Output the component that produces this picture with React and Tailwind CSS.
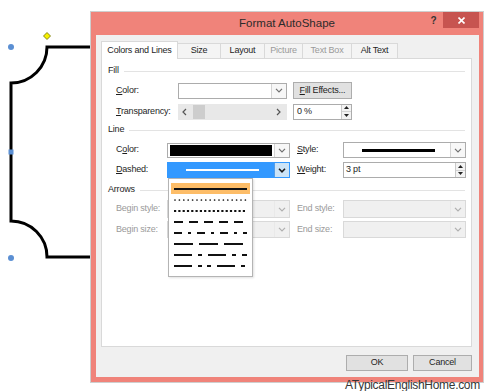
import clsx from 'clsx'

function Chevron({ dark }) {
  return (
    <svg width="8" height="5" viewBox="0 0 8 5">
      <path d="M1 0.8 L4 3.8 L7 0.8" fill="none" stroke={dark ? '#1a1a1a' : '#707070'} strokeWidth={dark ? 1.6 : 1.2} />
    </svg>
  )
}

function Spin() {
  return (
    <div className="w-[10px] flex flex-col border-l border-[#c9c9c9] bg-[#f3f3f3]">
      <div className="flex-1 flex items-center justify-center border-b border-[#d4d4d4]">
        <svg width="5" height="3" viewBox="0 0 5 3"><path d="M0 3 L2.5 0 L5 3Z" fill="#222" /></svg>
      </div>
      <div className="flex-1 flex items-center justify-center">
        <svg width="5" height="3" viewBox="0 0 5 3"><path d="M0 0 L2.5 3 L5 0Z" fill="#222" /></svg>
      </div>
    </div>
  )
}

function Combo({ className, children, disabled, active }) {
  return (
    <div
      className={clsx(
        'flex border',
        disabled && 'border-[#d9d9d9] bg-[#f0f0f0]',
        active && 'border-[#3399ff] bg-[#3399ff]',
        !disabled && !active && 'border-[#acacac] bg-white',
        className
      )}
    >
      <div className="flex-1 flex items-center">{children}</div>
      <div
        className={clsx(
          'w-[15px] flex items-center justify-center border-l',
          disabled && 'border-[#e3e3e3] bg-[#f0f0f0] opacity-50',
          active && 'border-[#569de5] bg-[#cce4f7]',
          !disabled && !active && 'border-[#d4d4d4] bg-[#f7f7f7]'
        )}
      >
        <Chevron dark={active} />
      </div>
    </div>
  )
}

function Header({ label, className }) {
  return (
    <div className={clsx('flex items-center h-[12px] pl-[6px] pr-[6px]', className)}>
      <span>{label}</span>
      <div className="flex-1 h-px bg-[#e3e3e3] ml-[5px]" />
    </div>
  )
}

const dashes = [
  { d: null, w: 2 },
  { d: '0 4.4', w: 1.7, cap: 'round' },
  { d: '2.2 2.1', w: 2.2 },
  { d: '9 6', w: 2.2 },
  { d: '8 6 3 6', w: 2.2 },
  { d: '19 6', w: 2.2 },
  { d: '18 6 4 6', w: 2.2 },
  { d: '18 6 4 5 4 6', w: 2.2 },
]

function DashList() {
  return (
    <div className="absolute left-[66px] top-[119px] w-[85px] h-[99px] border border-[#b4b4b4] bg-white pt-[4px] shadow-[1px_1px_2px_rgba(0,0,0,0.12)]">
      {dashes.map((l, i) => (
        <div key={i} className={clsx('h-[11px] mx-[2px] px-[3px] flex items-center', i === 0 && 'bg-[#fdbd68]')}>
          <svg width="73" height="4" viewBox="0 0 73 4">
            <line x1={l.cap ? 1 : 0} y1="2" x2="73" y2="2" stroke="#111" strokeWidth={l.w} strokeDasharray={l.d || undefined} strokeLinecap={l.cap || 'butt'} />
          </svg>
        </div>
      ))}
    </div>
  )
}

function Tab({ label, className, selected, disabled }) {
  return (
    <div
      className={clsx(
        'flex items-center justify-center',
        selected ? 'h-[18px] -mb-px bg-white border border-b-0 border-[#d9d9d9] relative z-10' : 'h-[15px] bg-[#f4f4f4] border-t border-r border-[#d9d9d9]',
        disabled ? 'text-[#9a9a9a]' : 'text-[#1e1e1e]',
        className
      )}
    >
      {label}
    </div>
  )
}

function Shape() {
  return (
    <svg width="90" height="391" className="shrink-0" viewBox="0 0 90 391">
      <path d="M90 47 H47 A36 36 0 0 1 11 83 V221 A36 36 0 0 1 47 257 H90" fill="none" stroke="#000" strokeWidth="3" />
      <circle cx="11" cy="47" r="3" fill="#5b8fd3" />
      <rect x="8.5" y="149.5" width="5" height="5" fill="#5b8fd3" />
      <circle cx="11" cy="258" r="3" fill="#5b8fd3" />
      <path d="M47 32.5 L50.5 36 L47 39.5 L43.5 36Z" fill="#f6f000" stroke="#6b6b00" strokeWidth="0.8" />
    </svg>
  )
}

export default function App() {
  return (
    <div className="relative w-[500px] h-[391px] overflow-hidden bg-white flex font-['Liberation_Sans',Arial,sans-serif] text-[9px] tracking-[-0.2px] text-[#1e1e1e]">
      <Shape />

      <div className="mt-[11px] w-[394px] h-[372px] border border-[#cfcfcf] bg-[#f0837a] flex flex-col shrink-0">
        {/* title bar */}
        <div className="h-[23px] flex items-start">
          <div className="w-[59px]" />
          <div className="flex-1 h-full flex items-center justify-center text-[11.5px] tracking-normal text-[#2b2b2b]">Format AutoShape</div>
          <div className="w-[59px] flex items-start pr-[4px]">
            <div className="w-[19px] h-[16px] flex items-center justify-center text-[10px] font-bold text-[#333]">?</div>
            <div className="w-[36px] h-[16px] bg-[#c75450] flex items-center justify-center">
              <svg width="7" height="7" viewBox="0 0 7 7">
                <path d="M0.5 0.5 L6.5 6.5 M6.5 0.5 L0.5 6.5" stroke="#fff" strokeWidth="1.6" />
              </svg>
            </div>
          </div>
        </div>

        {/* body */}
        <div className="ml-[5px] mr-[4px] h-[342px] bg-[#f0f0f0] flex flex-col">
          <div className="mt-[6px] h-[17px] pl-[5px] flex items-end">
            <Tab label="Colors and Lines" selected className="w-[77px]" />
            <Tab label="Size" className="w-[43px]" />
            <Tab label="Layout" className="w-[44px]" />
            <Tab label="Picture" disabled className="w-[38px]" />
            <Tab label="Text Box" disabled className="w-[49px]" />
            <Tab label="Alt Text" className="w-[46px]" />
          </div>

          <div className="relative ml-[5px] w-[371px] h-[289px] bg-white border border-[#d9d9d9] flex flex-col">
            <Header label="Fill" className="mt-[6px]" />

            <div className="mt-[5px] h-[17px] flex items-center pl-[14px]">
              <span className="w-[62px]"><span className="underline">C</span>olor:</span>
              <Combo className="w-[109px] h-[16px]" />
              <div className="ml-[6px] w-[59px] h-[17px] bg-[#e1e1e1] border border-[#adadad] flex items-center justify-center">
                <span><span className="underline">F</span>ill Effects...</span>
              </div>
            </div>

            <div className="mt-[4px] h-[17px] flex items-center pl-[14px]">
              <span className="w-[62px]"><span className="underline">T</span>ransparency:</span>
              <div className="w-[109px] h-[16px] bg-[#e8e8e8] flex items-center">
                <svg width="15" height="16" viewBox="0 0 15 16" className="shrink-0">
                  <path d="M8 5 L5 8 L8 11" fill="none" stroke="#555" strokeWidth="1.2" />
                </svg>
                <div className="w-[12px] h-[14px] bg-[#cdcdcd]" />
                <div className="flex-1" />
                <svg width="15" height="16" viewBox="0 0 15 16" className="shrink-0">
                  <path d="M5 5 L8 8 L5 11" fill="none" stroke="#555" strokeWidth="1.2" />
                </svg>
              </div>
              <div className="ml-[6px] w-[59px] h-[16px] border border-[#acacac] bg-white flex">
                <div className="flex-1 flex items-center pl-[3px]">0 %</div>
                <Spin />
              </div>
            </div>

            <Header label="Line" className="mt-[4px]" />

            <div className="mt-[6px] h-[16px] flex items-center pl-[14px]">
              <span className="w-[51px]">C<span className="underline">o</span>lor:</span>
              <Combo className="w-[123px] h-[15px]">
                <div className="mx-[2px] w-full h-[11px] bg-black" />
              </Combo>
              <span className="ml-[7px] w-[46px]"><span className="underline">S</span>tyle:</span>
              <Combo className="w-[123px] h-[16px]">
                <div className="ml-[18px] w-[73px] h-[3px] bg-black" />
              </Combo>
            </div>

            <div className="mt-[4px] h-[16px] flex items-center pl-[14px]">
              <span className="w-[51px]"><span className="underline">D</span>ashed:</span>
              <Combo active className="w-[123px] h-[16px]">
                <div className="ml-[18px] w-[73px] h-[2px] bg-white" />
              </Combo>
              <span className="ml-[7px] w-[46px]"><span className="underline">W</span>eight:</span>
              <div className="w-[123px] h-[16px] border border-[#acacac] bg-white flex">
                <div className="flex-1 flex items-center pl-[2px]">3 pt</div>
                <Spin />
              </div>
            </div>

            <Header label="Arrows" className="mt-[6px]" />

            <div className="mt-[4px] h-[18px] flex items-center pl-[14px] text-[#9a9a9a]">
              <span className="w-[51px]">Begin style:</span>
              <Combo disabled className="w-[123px] h-[18px]" />
              <span className="ml-[7px] w-[46px]">End style:</span>
              <Combo disabled className="w-[123px] h-[18px]" />
            </div>

            <div className="mt-[3px] h-[17px] flex items-center pl-[14px] text-[#9a9a9a]">
              <span className="w-[51px]">Begin size:</span>
              <Combo disabled className="w-[123px] h-[17px]" />
              <span className="ml-[7px] w-[46px]">End size:</span>
              <Combo disabled className="w-[123px] h-[17px]" />
            </div>

            <DashList />
          </div>

          <div className="mt-[8px] ml-[5px] w-[371px] flex justify-end gap-[5px]">
            <div className="w-[62px] h-[16px] bg-[#e1e1e1] border border-[#adadad] flex items-center justify-center">OK</div>
            <div className="w-[59px] h-[16px] bg-[#e1e1e1] border border-[#adadad] flex items-center justify-center">Cancel</div>
          </div>
        </div>
      </div>

      <div className="absolute left-[345px] top-[379px] leading-none text-[12px] tracking-[-0.3px] text-[#363636]">ATypicalEnglishHome.com</div>
    </div>
  )
}
